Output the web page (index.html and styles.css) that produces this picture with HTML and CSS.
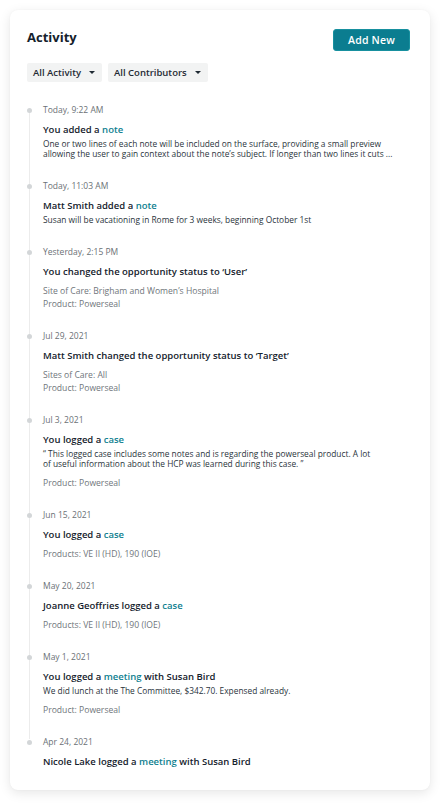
FILE: index.html
```html
<!DOCTYPE html>
<html lang="en">
<head>
<meta charset="utf-8">
<title>Activity</title>
<link rel="stylesheet" href="styles.css">
</head>
<body>
<div class="card">
  <div class="header">
    <h1 class="title">Activity</h1>
    <button class="btn">Add New</button>
  </div>
  <div class="filters">
    <div class="dropdown">All Activity <span class="caret"></span></div>
    <div class="dropdown">All Contributors <span class="caret"></span></div>
  </div>
  <ul class="timeline">
    <li class="entry">
      <div class="ts">Today, 9:22 AM</div>
      <div class="etitle">You added a <span class="link">note</span></div>
      <div class="body">One or two lines of each note will be included on the surface, providing a small preview<br>allowing the user to gain context about the note’s subject. If longer than two lines it cuts ...</div>
    </li>
    <li class="entry">
      <div class="ts">Today, 11:03 AM</div>
      <div class="etitle">Matt Smith added a <span class="link">note</span></div>
      <div class="body">Susan will be vacationing in Rome for 3 weeks, beginning October 1st</div>
    </li>
    <li class="entry">
      <div class="ts">Yesterday, 2:15 PM</div>
      <div class="etitle">You changed the opportunity status to ‘User’</div>
      <div class="meta">Site of Care: Brigham and Women’s Hospital<br>Product: Powerseal</div>
    </li>
    <li class="entry">
      <div class="ts">Jul 29, 2021</div>
      <div class="etitle">Matt Smith changed the opportunity status to ‘Target’</div>
      <div class="meta">Sites of Care: All<br>Product: Powerseal</div>
    </li>
    <li class="entry">
      <div class="ts">Jul 3, 2021</div>
      <div class="etitle">You logged a <span class="link">case</span></div>
      <div class="body">“ This logged case includes some notes and is regarding the powerseal product. A lot<br>of useful information about the HCP was learned during this case. ”</div>
      <div class="meta">Product: Powerseal</div>
    </li>
    <li class="entry">
      <div class="ts">Jun 15, 2021</div>
      <div class="etitle">You logged a <span class="link">case</span></div>
      <div class="meta">Products: VE II (HD), 190 (IOE)</div>
    </li>
    <li class="entry">
      <div class="ts">May 20, 2021</div>
      <div class="etitle">Joanne Geoffries logged a <span class="link">case</span></div>
      <div class="meta">Products: VE II (HD), 190 (IOE)</div>
    </li>
    <li class="entry">
      <div class="ts">May 1, 2021</div>
      <div class="etitle">You logged a <span class="link">meeting</span> with Susan Bird</div>
      <div class="body">We did lunch at the The Committee, $342.70. Expensed already.</div>
      <div class="meta">Product: Powerseal</div>
    </li>
    <li class="entry last">
      <div class="ts">Apr 24, 2021</div>
      <div class="etitle">Nicole Lake logged a <span class="link">meeting</span> with Susan Bird</div>
    </li>
  </ul>
</div>
</body>
</html>
```

FILE: styles.css
```css
* { box-sizing: border-box; }
html, body {
  margin: 0;
  padding: 0;
  background: #ffffff;
}
body {
  font-family: "Open Sans", "Noto Sans", sans-serif;
  color: #1b2a36;
  width: 448px;
  height: 808px;
  overflow: hidden;
}
.card {
  margin: 10px 18px 0 10px;
  width: 420px;
  height: 780px;
  background: #fff;
  border-radius: 8px;
  box-shadow: 0 3px 12px rgba(0, 0, 0, 0.10), 0 0 2px rgba(0, 0, 0, 0.04);
  padding: 19px 20px 0 17px;
}
.header {
  display: flex;
  justify-content: space-between;
  align-items: flex-start;
  height: 22px;
}
.title {
  margin: 0;
  font-size: 13px;
  font-weight: 700;
  line-height: 16px;
  color: #14212c;
}
.btn {
  width: 77px;
  height: 22px;
  background: #0b7d90;
  border: 1px solid #17909f;
  border-radius: 3px;
  color: #fff;
  font-family: inherit;
  font-size: 10.5px;
  font-weight: 600;
  letter-spacing: 0.2px;
  padding: 0;
  cursor: pointer;
}
.filters {
  display: flex;
  gap: 6px;
  margin-top: 12px;
}
.dropdown {
  height: 19px;
  background: #f2f3f3;
  border-radius: 2px;
  padding: 0 7px 0 6px;
  display: flex;
  align-items: center;
  font-size: 9.5px;
  font-weight: 600;
  color: #1f2a33;
  gap: 8px;
}
.caret {
  width: 0;
  height: 0;
  border-left: 3px solid transparent;
  border-right: 3px solid transparent;
  border-top: 3.5px solid #1f2a33;
}
.timeline {
  list-style: none;
  margin: 22px 0 0;
  padding: 0;
  position: relative;
}
.timeline::before {
  content: "";
  position: absolute;
  left: 2px;
  top: 8px;
  bottom: 30px;
  width: 1px;
  background: #ececec;
}
.entry {
  position: relative;
  padding: 0 0 20px 16px;
}
.entry.last { padding-bottom: 0; }
.entry::before {
  content: "";
  position: absolute;
  left: 0;
  top: 3.5px;
  width: 5px;
  height: 5px;
  border-radius: 50%;
  background: #d3d6d8;
}
.ts {
  font-size: 8.5px;
  line-height: 12px;
  color: #6b7176;
}
.etitle {
  margin-top: 7px;
  font-size: 9.5px;
  font-weight: 600;
  line-height: 14px;
  color: #14212c;
  white-space: nowrap;
}
.link { color: #0e7f90; }
.body {
  margin-top: 2px;
  font-size: 8.35px;
  line-height: 10px;
  color: #2a343c;
  white-space: nowrap;
}
.body:last-child { margin-bottom: 1px; }
.meta {
  margin-top: 6px;
  font-size: 8.6px;
  line-height: 13px;
  color: #6f767b;
  white-space: nowrap;
}
.meta:last-child { margin-bottom: -1px; }
.body + .meta { margin-top: 8px; }
```
